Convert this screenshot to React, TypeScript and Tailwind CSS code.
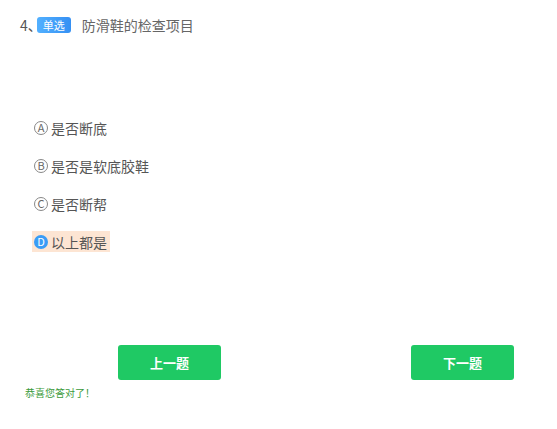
const options = [
  { key: 'A', text: '是否断底' },
  { key: 'B', text: '是否是软底胶鞋' },
  { key: 'C', text: '是否断帮' },
  { key: 'D', text: '以上都是', picked: true },
]

export default function App() {
  return (
    <div
      className="w-[557px] h-[429px] bg-white relative"
      style={{ fontFamily: '"Noto Sans CJK SC", "Liberation Sans", sans-serif' }}
    >
      <div className="flex items-center pt-[17px] pl-[20px] h-[16px] box-content">
        <span className="mr-[-5px] whitespace-nowrap text-[14px] text-[#555] leading-none">4、</span>
        <span className="h-[16px] w-[34px] rounded-[3px] bg-gradient-to-r from-[#52b0ff] to-[#3590f3] text-white text-[11px] leading-[16px] text-center">
          单选
        </span>
        <span className="ml-[11px] text-[14px] text-[#666] leading-none">防滑鞋的检查项目</span>
      </div>

      <div className="flex flex-col items-start pl-[32px] pt-[84px] gap-[17px]">
        {options.map((o) => (
          <div
            key={o.key}
            className={
              'flex items-center h-[21px] pl-[2px] pr-[3px] ' +
              (o.picked ? 'bg-[#fde5d3]' : '')
            }
          >
            <span
              className={
                'w-[14px] h-[14px] rounded-full flex items-center justify-center text-[11px] leading-none ' +
                (o.picked
                  ? 'bg-[#3a9cf6] text-white'
                  : 'border border-[#888] text-[#666]')
              }
            >
              {o.key}
            </span>
            <span className="ml-[3px] text-[14px] text-[#555] leading-none">{o.text}</span>
          </div>
        ))}
      </div>

      <div className="flex justify-between pl-[118px] pr-[43px] mt-[93px]">
        <button className="w-[103px] h-[35px] rounded-[3px] bg-[#1fc964] text-white text-[13px] font-bold">
          上一题
        </button>
        <button className="w-[103px] h-[35px] rounded-[3px] bg-[#1fc964] text-white text-[13px] font-bold">
          下一题
        </button>
      </div>

      <div className="pl-[25px] mt-[8px] text-[10px] text-[#3a9a3a] leading-none">恭喜您答对了！</div>
    </div>
  )
}
